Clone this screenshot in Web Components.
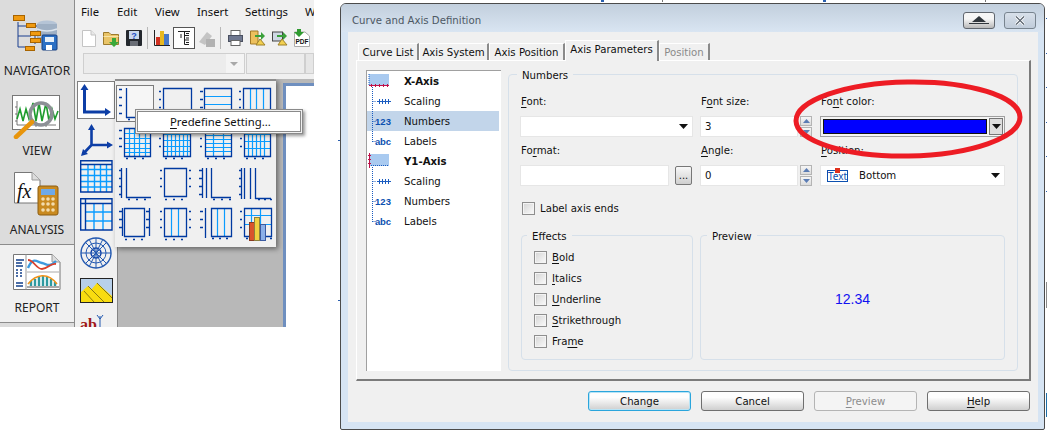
<!DOCTYPE html>
<html>
<head>
<meta charset="utf-8">
<title>Curve and Axis Definition</title>
<style>
  html, body { margin: 0; padding: 0; background: #fff; }
  body {
    width: 1047px; height: 432px; overflow: hidden; position: relative;
    display: flex; align-items: flex-start;
    font: 11.3px "DejaVu Sans Condensed", "DejaVu Sans", sans-serif; color: #111;
  }
  u { text-underline-offset: 2px; }
</style>
</head>
<body>

<desk-scraps></desk-scraps>

<app-window>
  <nav-rail slot="rail">
    <nav-item label="NAVIGATOR" icon="navigator" style="--pad:14px;--gap:7px;--h:85px"></nav-item>
    <nav-item label="VIEW" icon="view" style="--pad:10px;--gap:4px;--h:80px"></nav-item>
    <nav-item label="ANALYSIS" icon="analysis" style="--pad:7px;--gap:6px;--h:80px;border-bottom:1px solid #8c8c8c;box-sizing:border-box"></nav-item>
    <nav-item label="REPORT" icon="report" style="--pad:9px;--gap:10px;--h:77px;background:#f0f0f0"></nav-item>
  </nav-rail>
  <menu-bar slot="top"><span>File</span><span>Edit</span><span>View</span><span>Insert</span><span>Settings</span><span>W</span></menu-bar>
  <tool-bar slot="top"></tool-bar>
  <combo-row slot="top"></combo-row>
  <chart-palette slot="work"></chart-palette>
</app-window>

<axis-dialog heading="Curve and Axis Definition">
  <tab-item slot="tabs" style="width:61px">Curve List</tab-item>
  <tab-item slot="tabs" style="width:70px">Axis System</tab-item>
  <tab-item slot="tabs" style="width:76px">Axis Position</tab-item>
  <tab-item slot="tabs" active style="width:94px">Axis Parameters</tab-item>
  <tab-item slot="tabs" disabled style="width:51px">Position</tab-item>

  <axis-tree slot="tree">
    <tree-row kind="x" bold>X-Axis</tree-row>
    <tree-row kind="scale">Scaling</tree-row>
    <tree-row kind="num" selected>Numbers</tree-row>
    <tree-row kind="abc" last>Labels</tree-row>
    <tree-row kind="y" bold>Y1-Axis</tree-row>
    <tree-row kind="scale">Scaling</tree-row>
    <tree-row kind="num">Numbers</tree-row>
    <tree-row kind="abc" last>Labels</tree-row>
  </axis-tree>

  <group-box slot="form" caption="Numbers" style="width:510px;height:297px;--pad:11px 0 0 11px;--capy:-7px;--capx:8px">
    <div style="display:grid;grid-template-columns:173px 112px 186px;column-gap:7px;row-gap:6px">
      <form-field><u>F</u>ont:<combo-box slot="control" arrow></combo-box></form-field>
      <form-field>F<u>o</u>nt size:<spin-box slot="control" value="3"></spin-box></form-field>
      <form-field style="margin-left:1px">Fo<u>n</u>t color:<color-combo slot="control"></color-combo></form-field>
      <form-field>Fo<u>r</u>mat:<ellipsis-field slot="control"></ellipsis-field></form-field>
      <form-field><u>A</u>ngle:<spin-box slot="control" value="0"></spin-box></form-field>
      <form-field style="margin-left:1px"><u>P</u>osition:<combo-box slot="control" arrow text="Bottom" texticon></combo-box></form-field>
    </div>
    <check-row style="margin:14px 0 0 2px">Label axis ends</check-row>
    <div style="display:flex;gap:7px;margin:19px 0 0 1px">
      <group-box caption="Effects" style="width:172px;height:125px;--pad:3px 0 0 12px;--capx:5px">
        <check-row style="--row:21px"><u>B</u>old</check-row>
        <check-row style="--row:21px"><u>I</u>talics</check-row>
        <check-row style="--row:21px"><u>U</u>nderline</check-row>
        <check-row style="--row:21px"><u>S</u>trikethrough</check-row>
        <check-row style="--row:21px">Fra<u>m</u>e</check-row>
      </group-box>
      <group-box caption="Preview" style="width:305px;height:125px;--pad:0;--capx:6px">
        <preview-text>12.34</preview-text>
      </group-box>
    </div>
  </group-box>

  <push-button slot="buttons" default>Change</push-button>
  <push-button slot="buttons">Cancel</push-button>
  <push-button slot="buttons" disabled><u>P</u>review</push-button>
  <push-button slot="buttons"><u>H</u>elp</push-button>
</axis-dialog>

<red-oval></red-oval>
<predefine-menu><u>P</u>redefine Setting...</predefine-menu>

<script>
// small helper, all the elements below are the same shape
function define(name, css, html, init) {
  customElements.define(name, class extends HTMLElement {
    constructor() {
      super();
      this.attachShadow({mode: 'open'});
    }
    connectedCallback() {
      var body = typeof html === 'function' ? html(this) : html;
      this.shadowRoot.innerHTML = '<style>' + css + '</style>' + body;
      if(init) init(this);
    }
  });
}

var BLUE = '#0039a0', SKY = '#0a9cff';

/* ---------- nav rail icons ---------- */
var navIcons = {
  navigator: `<svg width="52" height="42" viewBox="0 0 52 42">
    <path d="M7 8V33H20M7 12H14M7 22H20M20 27H24" fill="none" stroke="#1a3f8f" stroke-width="1"/>
    <path d="M14 12H26M24 18V30" fill="none" stroke="#1a3f8f"/>
    <ellipse cx="36" cy="10" rx="10" ry="3.500" fill="#b5c4d6"/><rect x="26" y="10" width="20" height="19" fill="#9fb0c4"/>
    <path d="M26 15q10 4 20 0M26 21q10 4 20 0" stroke="#dde5ee" fill="none" stroke-width="1.500"/>
    <g fill="#f09a10" stroke="#a86400"><rect x="2.500" y="1.500" width="11" height="5"/><rect x="15.500" y="9.500" width="9" height="4"/><rect x="19.500" y="17.500" width="10" height="4"/><rect x="19.500" y="24.500" width="10" height="4"/><rect x="14.500" y="32.500" width="9" height="4"/></g>
    <rect x="31" y="21" width="15" height="15" rx="1" fill="#2c70c4" stroke="#173f80"/>
    <rect x="34" y="23" width="9" height="5" fill="#e4eef8"/><rect x="35" y="31" width="6" height="5" fill="#fff"/>
  </svg>`,
  view: `<svg width="50" height="44" viewBox="0 0 50 44">
    <rect x=".5" y=".5" width="47" height="34" fill="#fff" stroke="#777"/>
    <path d="M5 6V30H44M5 12H3M5 19H3M5 26H3M14 30v2M24 30v2M34 30v2" stroke="#555" fill="none" stroke-width=".8"/>
    <path d="M5 24l3-10 3 12 3-12 3 10 4-16 3 18 3-18 3 18 4-18 3 18 3-12 3 10 3-8" stroke="#1d9c2d" fill="none" stroke-width="1.600"/>
    <circle cx="29" cy="19" r="11" fill="none" stroke="#8d9096" stroke-width="3.500"/>
    <path d="M20 27L4 42" stroke="#e8950c" stroke-width="4.500" stroke-linecap="round"/>
  </svg>`,
  analysis: `<svg width="46" height="44" viewBox="0 0 46 44">
    <path d="M.5.5H18L26 8V31H.5Z" fill="#fff" stroke="#777"/><path d="M18 .5V8H26" fill="#ddd" stroke="#999"/>
    <text x="3" y="26" font-family="Liberation Serif,serif" font-style="italic" font-size="20" fill="#111">fx</text>
    <rect x="24" y="14" width="20" height="29" rx="2" fill="#c98a20" stroke="#8c5c10"/>
    <rect x="27" y="17" width="14" height="6" fill="#6ea9e8"/>
    <g fill="#f3dcae"><circle cx="29" cy="27" r="1.800"/><circle cx="34" cy="27" r="1.800"/><circle cx="39" cy="27" r="1.800"/><circle cx="29" cy="32" r="1.800"/><circle cx="34" cy="32" r="1.800"/><circle cx="39" cy="32" r="1.800"/><circle cx="29" cy="38" r="1.800"/><circle cx="34" cy="38" r="1.800"/><circle cx="39" cy="38" r="1.800"/></g>
  </svg>`,
  report: `<svg width="48" height="36" viewBox="0 0 48 36">
    <path d="M.5.5H39L47 8V35.500H.5Z" fill="#fff" stroke="#777"/><path d="M39 .5V8H47" fill="#ddd" stroke="#999"/>
    <path d="M13 .5V35.500" stroke="#999"/>
    <path d="M3 6h8M3 9h6M3 12h7M3 16h2M7 16h2M3 19h2M7 19h2M3 22h2M7 22h2M3 29h7M3 32h7" stroke="#123f8a" stroke-width="1.400"/>
    <path d="M14 18H46" stroke="#aaa"/>
    <path d="M15 14c5-12 9-6 14-5s7 5 14-2" fill="none" stroke="#3d9ade" stroke-width="2.400"/>
    <path d="M15 6c6 0 8 9 14 9s8-6 14-5" fill="none" stroke="#d8402c" stroke-width="1.800"/>
    <path d="M18 32v-5M22 32v-7M26 32v-9M30 32v-10M34 32v-9M38 32v-7M42 32v-4" stroke="#2e9aa0" stroke-width="2.400"/>
    <path d="M15 30c8-10 20-12 29 0" fill="none" stroke="#f0931a" stroke-width="1.600"/>
    <path d="M14 33H46" stroke="#555"/>
  </svg>`
};

define('app-window', `
  :host { display: grid; grid-template-columns: 75px 239px; width: 314px; height: 327px; overflow: hidden; flex: none; font: 12px "Noto Sans", "Open Sans", sans-serif; }
  .main { display: flex; flex-direction: column; min-width: 0; height: 327px; }
`, `<slot name="rail"></slot><div class="main"><slot name="top"></slot><slot name="work"></slot></div>`);

define('nav-rail', `
  :host { display: flex; flex-direction: column; width: 75px; height: 327px; box-sizing: border-box; background: #dcdcdc; border-right: 1px solid #8c8c8c; }
  .rest { flex: 1; border-top: 1px solid #8c8c8c; }
`, `<slot></slot><div class="rest"></div>`);

define('nav-item', `
  :host { display: flex; flex-direction: column; align-items: center; height: var(--h); padding-top: var(--pad); box-sizing: border-box; flex: none; }
  svg { display: block; }
  span { display: block; margin-top: var(--gap); line-height: 16px; font-size: 12px; white-space: nowrap; color: #222; }
`, function(el) {
  return navIcons[el.getAttribute('icon')] + '<span>' + el.getAttribute('label') + '</span>';
});

define('menu-bar', `
  :host { display: block; height: 25px; background: #f0f0f0; padding-left: 6px; box-sizing: border-box; white-space: nowrap; overflow: hidden; flex: none; }
  ::slotted(span) { display: inline-block; line-height: 24px; font-size: 11.300px; }
  ::slotted(span:nth-child(1)) { width: 36px; }
  ::slotted(span:nth-child(2)) { width: 38px; }
  ::slotted(span:nth-child(3)) { width: 42px; }
  ::slotted(span:nth-child(4)) { width: 48px; }
  ::slotted(span:nth-child(5)) { width: 60px; }
`, `<slot></slot>`);

/* ---------- toolbar ---------- */
var toolIcons = `
  <svg style="margin-left:7px" width="14" height="17" viewBox="0 0 14 17"><path d="M.5.5H9L13.500 5V16.500H.5Z" fill="#fff" stroke="#c4c4c4"/><path d="M9 .5V5H13.500" fill="#e8e8e8" stroke="#c4c4c4"/></svg>
  <svg style="margin-left:7px" width="18" height="17" viewBox="0 0 18 17"><path d="M.5 2.500H6L8 4.500H15.500V14.500H.5Z" fill="#e9c468" stroke="#9c7a2c"/><path d="M.5 6.500H15.500" stroke="#f6e4a8"/><path d="M9 8H13V12H16L11 17L6 12H9Z" fill="#3aa83a"/></svg>
  <svg style="margin-left:5px" width="16" height="16" viewBox="0 0 16 16"><rect width="16" height="16" rx="1" fill="#24282e"/><rect x="3" y="1" width="10" height="8" fill="#c8d8ec"/><rect x="4" y="11" width="8" height="5" fill="#6a6e76"/><text x="8" y="9" text-anchor="middle" font-size="9" font-weight="700" fill="#1c50c8" font-family="Liberation Sans,sans-serif">?</text></svg>
  <i></i>
  <svg style="margin-left:6px" width="16" height="16" viewBox="0 0 16 16"><path d="M.5 0V15.500H16" stroke="#222" fill="none"/><rect x="2" y="7" width="4" height="8" fill="#d03020"/><rect x="6" y="1" width="4" height="14" fill="#e8b820"/><rect x="10" y="4" width="5" height="11" fill="#4878c8"/></svg>
  <b><svg width="14" height="16" viewBox="0 0 14 16"><path d="M1 1.500H13M7.500 1.500V14.500H12M7.500 5.500H12M7.500 10H12M4 4V8" stroke="#222" fill="none"/><path d="M9 3.500h3M9 8h3M9 12.500h3" stroke="#222"/></svg></b>
  <svg style="margin-left:3px" width="17" height="17" viewBox="0 0 17 17"><path d="M1 12L9 2L14 6L7 15Z" fill="#c4c4c4"/><rect x="8" y="9" width="9" height="8" fill="#b2b2b2"/></svg>
  <i style="margin-left:5px"></i>
  <svg style="margin-left:7px" width="15" height="16" viewBox="0 0 15 16"><rect x="3" y=".5" width="9" height="5" fill="#fff" stroke="#666"/><rect x=".5" y="5.500" width="14" height="6" fill="#6f7890" stroke="#4a5060"/><rect x="3" y="10.500" width="9" height="5" fill="#fff" stroke="#666"/></svg>
  <svg style="margin-left:7px" width="16" height="17" viewBox="0 0 16 17"><path d="M.5 1H8V14H.5Z" fill="#edc05c" stroke="#a27a28"/><path d="M5 5H11V2L15 6L11 10V7H5Z" fill="#3aa03a"/><path d="M6 15L10 9L15 15Z" fill="#f3d050" stroke="#9c8028"/></svg>
  <svg style="margin-left:6px" width="16" height="17" viewBox="0 0 16 17"><rect x=".5" y="2" width="10" height="9" fill="#cfd8e4" stroke="#444"/><path d="M5 5H11V2L15 6L11 10V7H5Z" fill="#3aa03a"/><path d="M6 15L10 9L15 15Z" fill="#f3d050" stroke="#9c8028"/></svg>
  <svg style="margin-left:6px" width="16" height="18" viewBox="0 0 16 18"><path d="M.5 3H11L15.500 7V17.500H.5Z" fill="#fff" stroke="#aaa"/><path d="M3 0H7V3H10L5 8L0 3H3Z" fill="#2f9a30"/><text x="8" y="15" text-anchor="middle" font-size="6.500" font-weight="700" font-family="Liberation Sans,sans-serif" fill="#111">PDF</text></svg>
  <svg style="margin-left:6px" width="4" height="16" viewBox="0 0 4 16"><path d="M0 1H3M0 5H3" stroke="#2f9a30"/></svg>
`;

define('tool-bar', `
  :host { display: flex; align-items: center; height: 26px; background: #f0f0f0; white-space: nowrap; overflow: hidden; flex: none; }
  svg { display: block; flex: none; }
  i { display: block; width: 1px; height: 22px; background: #b8b8b8; margin-left: 5px; flex: none; }
  b { display: flex; align-items: center; justify-content: center; width: 20px; height: 20px; margin-left: 3px; background: #fff; border: 1px solid #555; flex: none; }
`, toolIcons);

define('combo-row', `
  :host { display: flex; height: 28px; background: #f0f0f0; padding: 2px 0 0 8px; box-sizing: border-box; flex: none; overflow: hidden; }
  div { height: 21px; box-sizing: border-box; border: 1px solid #cfcfcf; background: #ececec; flex: none; }
  .a { width: 162px; position: relative; }
  .a::after { content: ''; display: block; position: absolute; right: 0; top: 0; bottom: 0; width: 18px; background: #f4f4f4; }
  .a::before { content: ''; position: absolute; z-index: 1; right: 6px; top: 8px; border: 4px solid transparent; border-top: 4px solid #a8a8a8; border-bottom: 0; }
  .b { width: 59px; margin-left: 1px; }
  .c { width: 9px; background: #e6e6e6; }
`, `<div class="a"></div><div class="b"></div><div class="c"></div>`);

/* ---------- chart palette ---------- */
// coordinates are relative to a 40x40 cell
function tL(x, y0, y1, step, w) {
  var s = '';
  for(var y = y0; y <= y1; y += step) s += 'M' + x + ' ' + (y + .5) + 'h' + (w || 3);
  return s;
}
function tB(y, x0, x1, step) {
  var s = '';
  for(var x = x0; x <= x1; x += step) s += 'M' + x + ' ' + (y + .5) + 'h2';
  return s;
}
function hl(x0, x1, ys) { return ys.map(function(y) { return 'M' + x0 + ' ' + (y + .5) + 'H' + x1; }).join(''); }
function vl(y0, y1, xs) { return xs.map(function(x) { return 'M' + (x + .5) + ' ' + y0 + 'V' + y1; }).join(''); }
function box(x0, y0, x1, y1) { return 'M' + (x0 + .5) + ' ' + (y0 + .5) + 'H' + (x1 + .5) + 'V' + (y1 + .5) + 'H' + (x0 + .5) + 'Z'; }

function thumb(dark, light, extra) {
  return '<svg width="40" height="40" viewBox="0 0 40 40"><path d="' + light + '" stroke="' + SKY + '" stroke-width="1.200" fill="none"/>' +
    '<path d="' + dark + '" stroke="' + BLUE + '" stroke-width="1.300" fill="none"/>' + (extra || '') + '</svg>';
}

var bars = '<g><rect x="13.500" y="17.500" width="5" height="18" fill="#d9532c" stroke="#8a3a20"/><rect x="18.500" y="12.500" width="5" height="23" fill="#f0d040" stroke="#8c8040"/><rect x="24.500" y="19.500" width="5" height="16" fill="#8cb0e8" stroke="#3a5aa0"/></g>';

var thumbs = [
  // row 1, cy = 85
  thumb(vl(3, 33, [10]) + hl(10, 37, [32]) + tL(3, 4, 30, 8) + tB(34, 12, 34, 8), ''),
  thumb(box(7, 3, 35, 35) + tL(3, 6, 30, 8, 2), ''),
  thumb(box(8, 3, 35, 35) + tL(4, 6, 30, 8), hl(8, 35, [11, 19, 27])),
  thumb(box(7, 3, 34, 35) + tL(3, 6, 30, 8, 2), vl(3, 35, [14, 20, 27])),
  // row 2, cy = 125
  thumb(box(8, 3, 34, 31) + tL(3, 5, 28, 8) + tB(33, 10, 32, 8), hl(8, 34, [8, 13, 18, 23, 27]) + vl(3, 31, [13, 18, 23, 29])),
  thumb(box(7, 3, 34, 31) + tL(3, 5, 28, 8, 2) + tB(33, 9, 32, 8), hl(7, 34, [9, 15, 21, 26]) + vl(3, 31, [11, 15, 19, 23, 27, 31])),
  thumb(box(9, 3, 35, 31) + tL(4, 5, 28, 8, 2) + tB(33, 11, 33, 8), hl(9, 35, [6, 10, 14, 18, 22, 26]) + vl(3, 31, [17, 27])),
  thumb(box(8, 3, 34, 31) + tL(4, 5, 28, 8, 2) + tB(33, 10, 32, 8), hl(8, 34, [9, 16, 23]) + vl(3, 31, [12, 16, 20, 24, 28])),
  // row 3, cy = 165
  thumb(vl(3, 33, [5, 10]) + hl(10, 35, [32]) + tL(3, 5, 30, 8, 2) + tB(34, 12, 34, 8), ''),
  thumb(box(8, 3, 30, 31) + tL(4, 5, 28, 8, 2) + tL(33, 5, 28, 8, 2) + tB(34, 9, 32, 8), ''),
  thumb(vl(3, 33, [6, 10, 15]) + hl(15, 35, [32]) + tL(3, 5, 30, 8) + tB(34, 17, 34, 8), ''),
  thumb(vl(3, 34, [5, 8, 14, 19]) + hl(19, 35, [33]) + tL(3, 5, 30, 8, 2) + tB(34, 22, 34, 6), ''),
  // row 4, cy = 205
  thumb(box(8, 3, 28, 31) + vl(3, 31, [6, 33]) + tL(3, 6, 28, 8) + tL(30, 6, 28, 8) + tB(34, 9, 30, 8), ''),
  thumb(box(8, 3, 30, 31) + tL(4, 6, 28, 8, 2) + tL(33, 6, 28, 8, 2) + tB(34, 9, 32, 8), vl(3, 31, [15, 22])),
  thumb(box(15, 3, 35, 31) + vl(3, 33, [9]) + tL(4, 6, 28, 8) + tB(33, 16, 34, 7), vl(3, 31, [21, 28])),
  thumb(box(8, 3, 35, 31) + tL(4, 6, 28, 8, 2) + tB(33, 10, 34, 8), hl(8, 35, [10, 19]) + vl(3, 31, [15, 24]), bars)
];

var sideIcons = `
  <svg width="38" height="38" viewBox="0 0 38 38" class="sel"><path d="M7.500 6V31H31" fill="none" stroke="#0d3ea6" stroke-width="3"/><path d="M7.500 3L3.500 9H11.500ZM34 31L28 27V35Z" fill="#0d3ea6"/></svg>
  <svg width="34" height="34" viewBox="0 0 34 34" style="margin:4px 0 0 3px"><path d="M11.500 5V22H30M11.500 22L3 31" fill="none" stroke="#0d3ea6" stroke-width="2.600"/><path d="M11.500 1L8 7H15ZM33 22L27 18.500V25.500ZM1 33L3 26L8 31Z" fill="#0d3ea6"/></svg>
  <svg width="33" height="33" viewBox="0 0 33 33" style="margin:3px 0 0 3px"><path d="M1 9.500H32M1 15.500H32M1 21.500H32M1 27H32M8 4V32M14.500 4V32M20.500 4V32M26.500 4V32" stroke="${SKY}" stroke-width="1.400" fill="none"/><path d="M.7 .7H32V32H.7ZM.7 4.500H32" stroke="${BLUE}" stroke-width="1.400" fill="none"/></svg>
  <svg width="33" height="33" viewBox="0 0 33 33" style="margin:5px 0 0 3px"><path d="M14 5V32M23 5V32M5 14H32M5 23H32" stroke="${SKY}" stroke-width="1.400" fill="none"/><path d="M.7 .7H32V32H.7ZM.7 5.500H32M5.500 .5V32" stroke="${BLUE}" stroke-width="1.400" fill="none"/></svg>
  <svg width="32" height="32" viewBox="0 0 32 32" style="margin:6px 0 0 3px"><g fill="none" stroke="#2258b0"><circle cx="16" cy="16" r="15" stroke-width="1.400"/><circle cx="16" cy="16" r="10"/><circle cx="16" cy="16" r="5" stroke="#0d3ea6" stroke-width="1.400"/><path d="M16 1V31M1 16H31M5 5L27 27M27 5L5 27M9 2L23 30M23 2L9 30"/></g></svg>
  <svg width="33" height="25" viewBox="0 0 33 25" style="margin:9px 0 0 3px"><rect x=".5" y=".5" width="32" height="24" fill="#b8d0ea" stroke="#222"/><path d="M1 24V14L8 8L11 12L17 5L32 18V24Z" fill="#f8dc10"/><path d="M8 8L24 24M17 5L32 20M4 13L14 24" stroke="#8a7a10" fill="none"/></svg>
  <svg width="33" height="18" viewBox="0 0 33 18" style="margin:12px 0 0 2px"><text x="1" y="15" font-family="Liberation Serif,serif" font-weight="700" font-size="16" fill="#a01818">ab</text><path d="M21 1V13H32" stroke="#2258b0" fill="none"/><path d="M18 0L21 4L24 0" stroke="#2258b0" fill="none"/></svg>
`;

define('chart-palette', `
  :host { display: flex; height: 248px; overflow: hidden; background: #b8b8b8; flex: 1; }
  .side { width: 43px; flex: none; background: #f0f0f0; border-right: 1px solid #858585; box-sizing: border-box; padding: 2px 0 0 2px; overflow: hidden; }
  .side svg { display: block; }
  .side svg.sel { background: #fff; outline: 1px solid #808080; outline-offset: -1px; width: 38px; height: 38px; }
  .fly {
    position: relative; z-index: 1; margin-left: -3px; width: 161px; height: 168px; box-sizing: border-box; flex: none;
    background: #f0f0f0; border-top: 2px solid #8e8e8e; box-shadow: 2px 2px 5px rgba(0,0,0,.45); padding: 4px 0 0 1px;
    display: grid; grid-template-columns: repeat(4, 40px); grid-auto-rows: 40px; justify-content: start;
  }
  .fly div { width: 40px; height: 40px; }
  .fly div:first-child { outline: 1px solid #7c7c7c; outline-offset: -1px; width: 38px; height: 37px; background: #f6f6f6; overflow: hidden; }
  svg { display: block; }
  .sheet { margin: 4px 0 0 7px; flex: 1; background: #fff; border: solid #6f8fbf; border-width: 3px 0 0 3px; }
`, function() {
  return '<div class="side">' + sideIcons + '</div>' +
    '<div class="fly">' + thumbs.map(function(t) { return '<div>' + t + '</div>'; }).join('') + '</div>' +
    '<div class="sheet"></div>';
});

define('predefine-menu', `
  :host {
    display: block; position: absolute; z-index: 5; left: 135px; top: 109px; width: 168px; height: 25px; box-sizing: border-box;
    background: #fff; border: 1px solid #8a8a8a; box-shadow: inset 0 0 0 1px #f0f0f0, inset 0 0 0 2px #8a8a8a, 2px 2px 3px rgba(0,0,0,.4);
    padding-left: 34px; font: 11.300px/24px "Noto Sans", sans-serif; color: #111;
  }
`, `<slot></slot>`);

/* ---------- dialog ---------- */
define('axis-dialog', `
  :host {
    display: block; flex: none; box-sizing: border-box; width: 705px; height: 427px; margin: 3px 0 0 26px;
    border: 1px solid #4b4b4b; border-radius: 6px 6px 2px 2px; background: #d6e4f3; padding: 0 6px 7px 7px;
  }
  .title { display: flex; align-items: center; height: 28px; margin: 0 -6px 0 -7px; padding: 4px 8px 0 11px; box-sizing: border-box; border-radius: 5px 5px 0 0; background: linear-gradient(#c2cfdd, #d9e5f2); color: #4d5864; }
  .title span { flex: 1; }
  .btn { display: flex; align-items: center; justify-content: center; box-sizing: border-box; width: 32px; height: 17px; border: 1px solid #60666e; border-radius: 3px; background: linear-gradient(#f6f6f6 40%, #b8b8b8); }
  .btn + .btn { margin-left: 9px; background: linear-gradient(#d8e0ea, #c0ccda); border-color: #78848f; }
  .client { height: 390px; background: #f0f0f0; padding: 8px 8px 0; box-sizing: border-box; }
  .tabs { display: flex; height: 20px; padding-left: 2px; align-items: flex-end; }
  .panel { display: flex; gap: 7px; width: 675px; height: 321px; box-sizing: border-box; padding: 9px 0 0 9px; border: solid #fff; border-width: 1px 2px 2px 1px; border-right-color: #7b7b7b; border-bottom-color: #7b7b7b; }
  .form { margin-top: 4px; }
  .foot { display: flex; gap: 10px; justify-content: flex-end; margin-top: 10px; }
`, function(el) {
  return `<div class="title"><span>${el.getAttribute('heading')}</span>
      <div class="btn"><svg width="24" height="8" viewBox="0 0 24 8"><path d="M12 0L19 6H5Z" fill="#30363c"/><path d="M2 7.500H22" stroke="#30363c"/></svg></div>
      <div class="btn"><svg width="12" height="11" viewBox="0 0 12 11"><path d="M2 1.500L10 9.500M10 1.500L2 9.500" stroke="#fff" stroke-width="3"/><path d="M2 1.500L10 9.500M10 1.500L2 9.500" stroke="#56606c" stroke-width="1.200"/></svg></div>
    </div>
    <div class="client">
      <div class="tabs"><slot name="tabs"></slot></div>
      <div class="panel"><slot name="tree"></slot><div class="form"><slot name="form"></slot></div></div>
      <div class="foot"><slot name="buttons"></slot></div>
    </div>`;
});

define('tab-item', `
  :host { display: block; height: 17px; line-height: 17px; box-sizing: border-box; text-align: center; white-space: nowrap; background: #f0f0f0; border-top: 1px solid #fff; border-left: 1px solid #fff; border-right: 2px solid #8a8a8a; flex: none; }
  :host([active]) { height: 21px; line-height: 18px; margin-bottom: -1px; position: relative; z-index: 1; }
  :host([disabled]) { color: #8a8a8a; }
`, `<slot></slot>`);

define('axis-tree', `
  :host { display: block; width: 135px; height: 301px; box-sizing: border-box; background: #fff; border-left: 1px solid #a0a0a0; border-top: 1px solid #a0a0a0; }
`, `<slot></slot>`);

function treeIcon(kind, last) {
  var dot = 'stroke="#1a5cc0" stroke-dasharray="1 1" fill="none"';
  var s = '<svg width="37" height="20" viewBox="0 0 37 20">';
  if(kind === 'x') {
    s += '<rect x="2" y="3" width="20" height="12" fill="#a9caf0"/><path d="M2 3V15" ' + dot + '/>';
    s += '<path d="M2 14.500H22" stroke="#c01048"/><path d="M4.500 13v3M8.500 13v3M12.500 13v3M16.500 13v3M20.500 13v3" stroke="#c01048"/><path d="M5.500 16V20" ' + dot + '/>';
  } else if(kind === 'y') {
    s += '<rect x="2" y="3" width="20" height="12" fill="#a9caf0"/><path d="M2 14.500H22" ' + dot + '/>';
    s += '<path d="M2.500 2V17" stroke="#c01048"/><path d="M1 4.500h3M1 8.500h3M1 12.500h3" stroke="#c01048"/><path d="M5.500 16V20" ' + dot + '/>';
  } else {
    s += '<path d="M5.500 0V' + (last ? 11 : 20) + 'M5.500 10.500H9" ' + dot + '/>';
    if(kind === 'scale') s += '<path d="M10 10.500H24M12.500 8v5M15.500 8v5M18.500 8v5M21.500 8v5" stroke="#1a5cc0"/>';
    if(kind === 'num') s += '<text x="8" y="14" font-size="9.500" font-weight="700" font-family="Liberation Sans,sans-serif" fill="#0c50b0" textLength="16">123</text>';
    if(kind === 'abc') s += '<text x="8" y="14" font-size="9.500" font-weight="700" font-family="Liberation Sans,sans-serif" fill="#0c50b0" textLength="16">abc</text>';
  }
  return s + '</svg>';
}

define('tree-row', `
  :host { display: flex; align-items: center; height: 20px; margin-right: 2px; white-space: nowrap; }
  :host([selected]) { background: #c2d5ea; }
  :host([bold]) { font-weight: 700; }
  svg { display: block; flex: none; }
`, function(el) {
  return treeIcon(el.getAttribute('kind'), el.hasAttribute('last')) + '<slot></slot>';
});

define('group-box', `
  :host { display: block; box-sizing: border-box; border: 1px solid #d6e0ea; border-radius: 4px; flex: none; }
  .cap { display: inline-block; margin: var(--capy, -8px) 0 0 var(--capx, 8px); padding: 0 5px; background: #f0f0f0; line-height: 16px; vertical-align: top; }
  .body { padding: var(--pad); }
`, function(el) {
  return '<div style="height:8px"><span class="cap">' + el.getAttribute('caption') + '</span></div><div class="body"><slot></slot></div>';
});

define('form-field', `
  :host { display: block; height: 43px; }
  .l { height: 22px; line-height: 16px; padding-left: 1px; white-space: nowrap; }
`, `<div class="l"><slot></slot></div><slot name="control"></slot>`);

var corners = 'background: linear-gradient(#777,#777) 0 0/1px 1px no-repeat, linear-gradient(#777,#777) 100% 0/1px 1px no-repeat, linear-gradient(#777,#777) 0 100%/1px 1px no-repeat, linear-gradient(#777,#777) 100% 100%/1px 1px no-repeat, #fff;';
var arrow = '<svg width="9" height="5" viewBox="0 0 9 5"><path d="M0 0H9L4.500 5Z" fill="#111"/></svg>';

define('combo-box', `
  :host { display: flex; align-items: center; height: 21px; box-sizing: border-box; ${corners} box-shadow: inset 0 0 0 1px #e6e6e6; padding: 0 5px 0 7px; }
  span { flex: 1; margin-left: 11px; }
  .t { box-sizing: border-box; width: 21px; height: 12px; border: 1px solid #0c50b0; position: relative; font: 10px/10px "Noto Sans", sans-serif; color: #0c50b0; text-align: center; flex: none; }
  .t::before { content: ''; position: absolute; left: 7px; top: -3px; width: 5px; height: 5px; background: #e0301c; }
  i { flex: 1; }
`, function(el) {
  var s = '';
  if(el.hasAttribute('texticon')) s += '<div class="t">Text</div>';
  if(el.getAttribute('text')) s += '<span>' + el.getAttribute('text') + '</span>';
  else s += '<i></i>';
  return s + arrow;
});

define('spin-box', `
  :host { display: flex; height: 21px; }
  .v { width: 98px; box-sizing: border-box; ${corners} box-shadow: inset 0 0 0 1px #e6e6e6; padding-left: 5px; line-height: 21px; }
  .s { margin-left: 2px; width: 12px; display: flex; flex-direction: column; gap: 1px; }
  .s div { flex: 1; display: flex; align-items: center; justify-content: center; box-sizing: border-box; border: 1px solid #b4b4b4; background: linear-gradient(#f6f6f6, #dcdcdc); }
`, function(el) {
  return '<div class="v">' + el.getAttribute('value') + '</div><div class="s">' +
    '<div><svg width="7" height="4" viewBox="0 0 7 4"><path d="M3.500 0L7 4H0Z" fill="#5a7cb4"/></svg></div>' +
    '<div><svg width="7" height="4" viewBox="0 0 7 4"><path d="M0 0H7L3.500 4Z" fill="#5a7cb4"/></svg></div></div>';
});

define('color-combo', `
  :host { display: flex; align-items: center; height: 21px; box-sizing: border-box; border: 1px solid #a0a0a0; padding: 0 1px 0 2px; background: #f4f4f4; }
  .c { width: 165px; height: 15px; box-sizing: border-box; background: #0000ff; border: 1px solid #101010; }
  .b { display: flex; align-items: center; justify-content: center; width: 14px; height: 17px; margin-left: 2px; box-sizing: border-box; border: 1px solid #777; background: #dedede; }
`, `<div class="c"></div><div class="b">${arrow}</div>`);

define('ellipsis-field', `
  :host { display: flex; align-items: center; height: 21px; }
  .v { width: 149px; height: 21px; box-sizing: border-box; ${corners} box-shadow: inset 0 0 0 1px #e6e6e6; }
  .b { width: 17px; height: 19px; margin-left: 6px; box-sizing: border-box; border: 1px solid #777; border-radius: 2px; background: linear-gradient(#f8f8f8, #cfcfcf); text-align: center; line-height: 17px; font-size: 11px; }
`, `<div class="v"></div><div class="b">...</div>`);

define('check-row', `
  :host { display: flex; align-items: center; gap: 5px; height: var(--row, 16px); white-space: nowrap; }
  .c { width: 13px; height: 13px; box-sizing: border-box; border: 1px solid #8e8e8e; background: linear-gradient(135deg, #d4d4d4, #fbfbfb); box-shadow: inset 0 0 0 1px #f4f4f4; flex: none; }
`, `<div class="c"></div><span><slot></slot></span>`);

define('preview-text', `
  :host { display: flex; height: 110px; align-items: center; justify-content: center; font: 14px "Liberation Sans", sans-serif; color: #1010f0; }
`, `<slot></slot>`);

define('push-button', `
  :host { display: block; width: 103px; height: 20px; box-sizing: border-box; border: 1px solid #6f6f6f; border-radius: 3px; text-align: center; line-height: 19px; background: linear-gradient(#fdfdfd 30%, #cfcfcf); }
  :host([default]) { border-color: #2aa5dc; box-shadow: inset 0 0 0 1px #b8e4f6; }
  :host([disabled]) { border-color: #b4b4b4; background: #f4f4f4; color: #8c8c8c; }
`, `<slot></slot>`);

define('red-oval', `
  :host { display: block; position: absolute; z-index: 5; left: 790px; top: 76px; width: 236px; height: 86px; pointer-events: none; }
  svg { display: block; }
`, `<svg width="236" height="86" viewBox="0 0 236 86"><ellipse cx="118" cy="43" rx="112" ry="37" fill="none" stroke="#ed1c24" stroke-width="5" transform="rotate(-1 118 43)"/></svg>`);

// bits of the plot that sits behind the dialog
define('desk-scraps', `
  :host { display: block; position: absolute; inset: 0; }
  i { position: absolute; display: block; background: #2a5fae; }
`, `
  <i style="left:601px;top:0;width:3px;height:2px"></i>
  <i style="left:662px;top:0;width:1px;height:2px;background:#777"></i>
  <i style="left:823px;top:0;width:3px;height:2px"></i>
  <i style="left:985px;top:0;width:1px;height:2px;background:#777"></i>
  <i style="left:338px;top:140px;width:2px;height:1px"></i>
  <i style="left:338px;top:300px;width:2px;height:1px"></i>
  <i style="left:1046px;top:18px;width:1px;height:1px"></i>
  <i style="left:1046px;top:53px;width:1px;height:1px"></i>
  <i style="left:1046px;top:87px;width:1px;height:1px"></i>
  <i style="left:1046px;top:122px;width:1px;height:1px"></i>
  <i style="left:1046px;top:156px;width:1px;height:1px"></i>
  <i style="left:1046px;top:191px;width:1px;height:1px"></i>
  <i style="left:1046px;top:282px;width:1px;height:26px;background:#8a8a8a"></i>
  <i style="left:1046px;top:393px;width:1px;height:24px;background:#1f6fa8"></i>
`);
</script>
</body>
</html>
